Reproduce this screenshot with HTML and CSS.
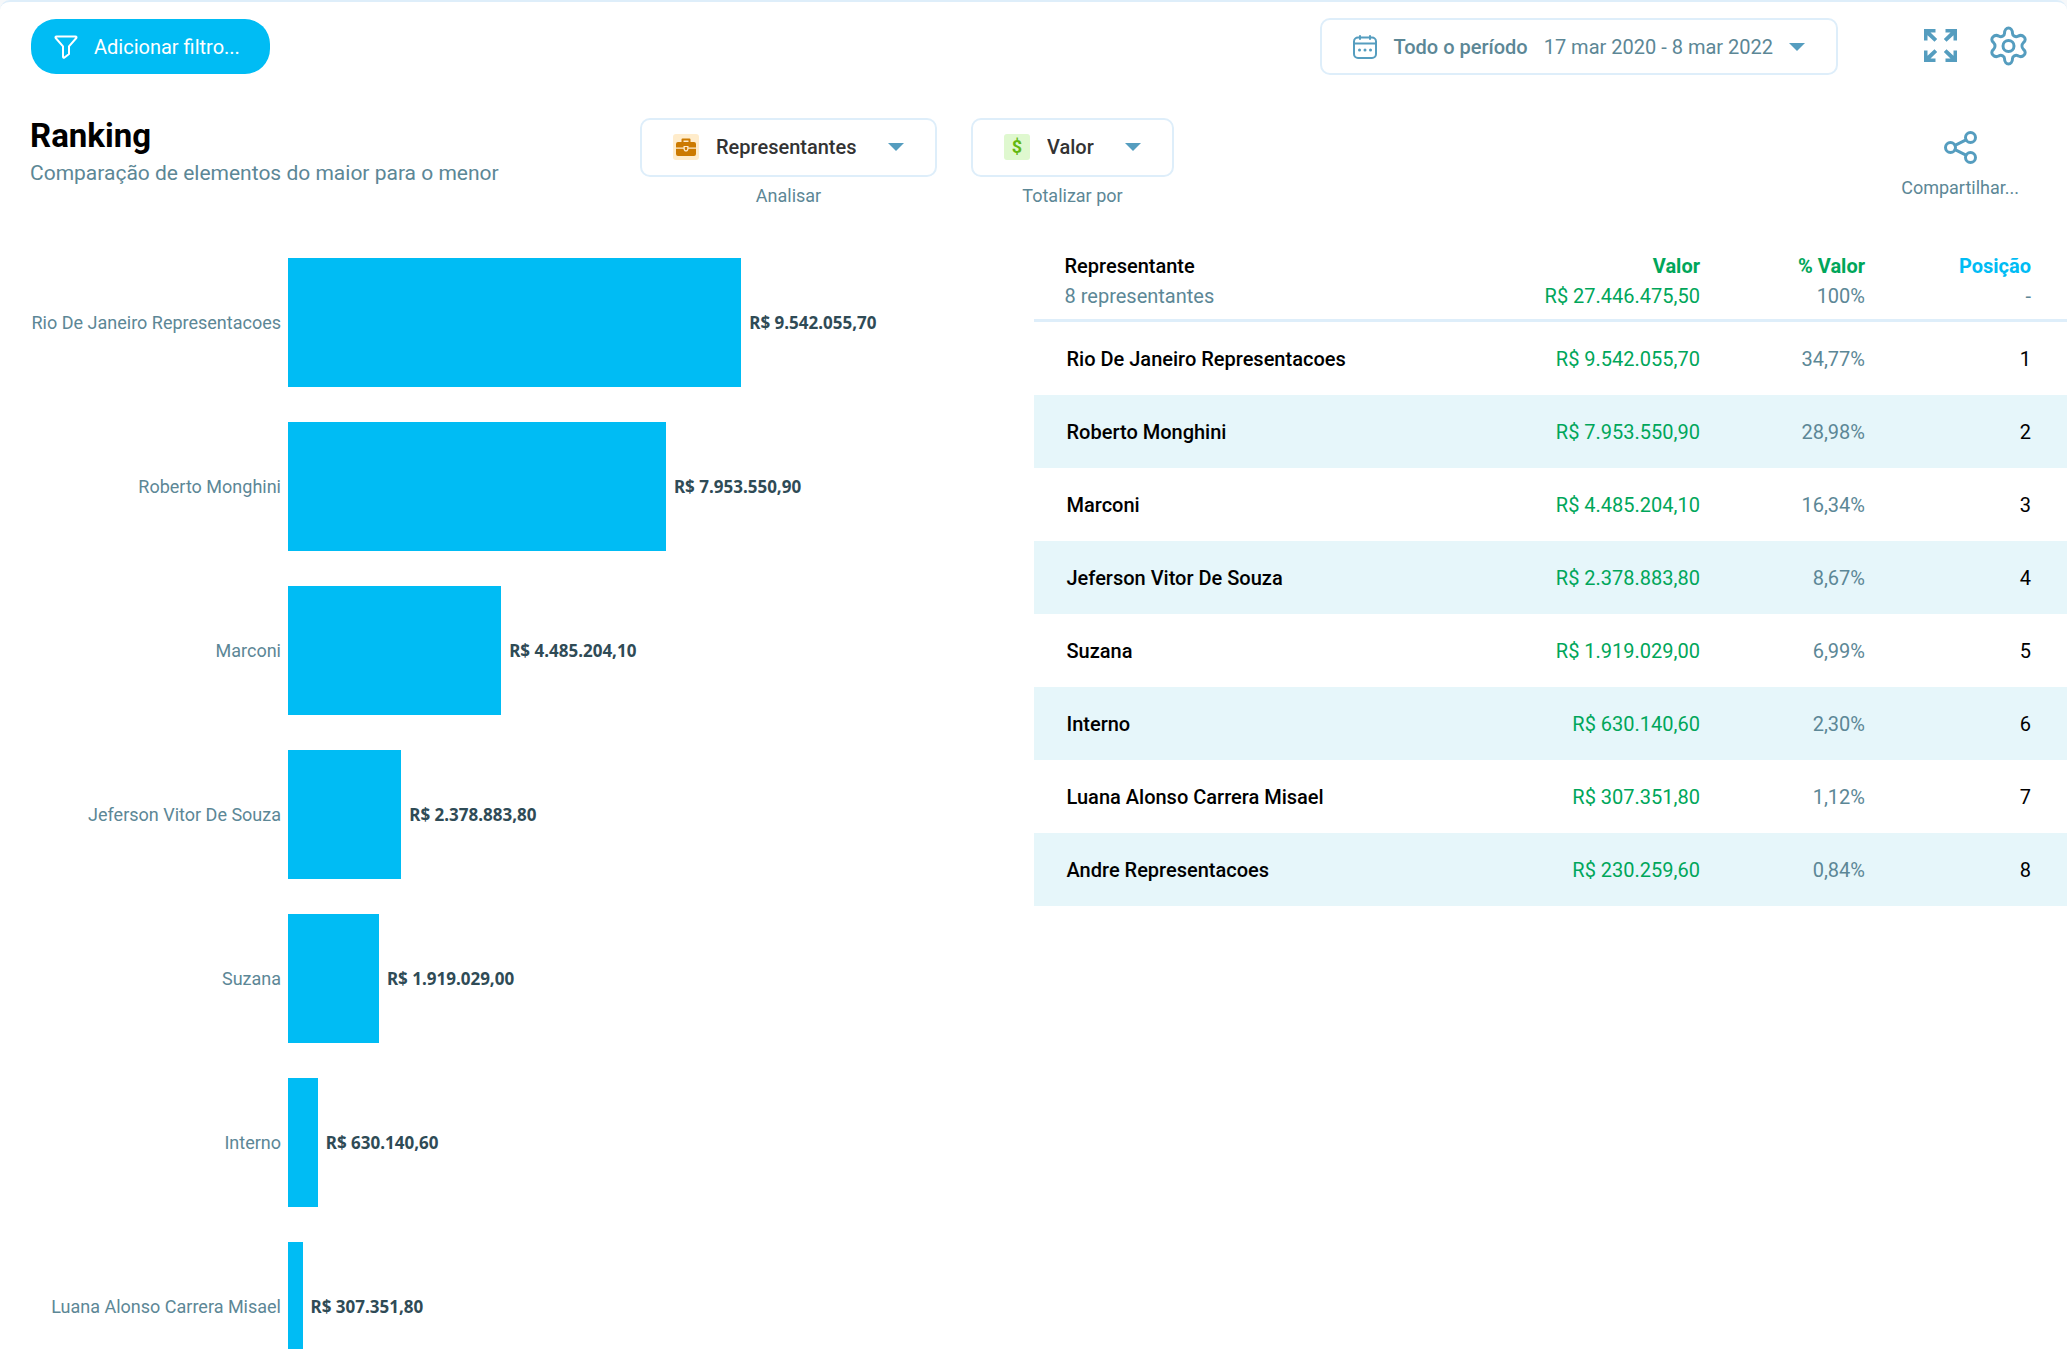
FILE: index.html
```html
<!DOCTYPE html>
<html lang="pt-BR">
<head>
<meta charset="utf-8">
<meta name="viewport" content="width=device-width, initial-scale=1">
<title>Ranking</title>
<link rel="stylesheet" href="styles.css">
</head>
<body>
<main class="card">
  <div class="toolbar">
    <button class="filter-button" type="button">
      <svg class="icon-filter" viewBox="0 0 24 24" aria-hidden="true"><path d="M2.500 1.500h19q1.500 0 .8 1.500l-7.300 8.300v7.700l-4.500 3.500q-1.500.6-1.500-.8V11.300L1.700 3q-.7-1.500.8-1.500z"/></svg>
      Adicionar filtro...
    </button>
    <div class="toolbar-right">
      <button class="period" type="button">
        <svg class="icon-calendar" viewBox="0 0 24 24" aria-hidden="true"><rect x="1" y="2.500" width="22" height="20.500" rx="4"/><path d="M1 8.500h22M7 1v3M17 1v3"/><path class="dots" d="M6.500 15h.01M12 15h.01M17.500 15h.01"/></svg>
        <strong class="period-name">Todo o período</strong>
        <span class="period-range">17 mar 2020 - 8 mar 2022</span>
        <svg class="caret" viewBox="0 0 16 8" aria-hidden="true"><path d="M0 0h16L8 8z"/></svg>
      </button>
      <div class="tools">
        <button class="icon-button" type="button" aria-label="Tela cheia">
          <svg class="icon-expand" viewBox="0 0 33 33" aria-hidden="true"><g id="arrow"><path class="solid" d="M0 0h11.500v3.500H6.500l6.700 6.500-2.700 2.800L3.500 6.300v5.200H0z"/></g><use href="#arrow" transform="matrix(-1 0 0 1 33 0)"/><use href="#arrow" transform="matrix(1 0 0 -1 0 33)"/><use href="#arrow" transform="rotate(180 16.500 16.500)"/></svg>
        </button>
        <button class="icon-button" type="button" aria-label="Configurações">
          <svg class="icon-gear" viewBox="0 0 35 40" aria-hidden="true"><circle cx="17.500" cy="20" r="5.500"/><path d="M13.500 7.500C13.500.2 21.500.2 21.500 7.500C21.500 9.500 24.500 11.500 27 10.200C31.500 7.500 37 13 32.500 16.500C30.500 18.500 30.500 21.500 32.500 23.500C37 27 31.500 32.500 27 29.800C24.500 28.500 21.500 30.500 21.500 32.500C21.500 39.800 13.500 39.800 13.500 32.500C13.500 30.500 10.500 28.500 8 29.800C3.500 32.500-2 27 2.500 23.500C4.500 21.500 4.500 18.500 2.500 16.500C-2 13 3.500 7.500 8 10.200C10.500 11.500 13.500 9.500 13.500 7.500z"/></svg>
        </button>
      </div>
    </div>
  </div>

  <header class="heading">
    <div class="titles">
      <h1>Ranking</h1>
      <p>Comparação de elementos do maior para o menor</p>
    </div>
    <div class="selectors">
      <div class="selector">
        <div class="select-box">
          <svg class="badge badge-orange" viewBox="0 0 26 26" aria-hidden="true"><path d="M5 8h16q2 0 2 2v3.500h-7.500V12h-5v1.500H3V10q0-2 2-2zM3 14.700h7.500q.2 2.800 2.500 2.800t2.500-2.800H23V20q0 2-2 2H5q-2 0-2-2z"/><path d="M11.800 13h2.400v2q-.2 1.200-1.200 1.200t-1.200-1.200z"/><path class="handle" d="M9.500 8V5.500h7V8"/></svg>
          <select id="analyse"><option>Representantes</option></select>
          <svg class="caret" viewBox="0 0 16 8" aria-hidden="true"><path d="M0 0h16L8 8z"/></svg>
        </div>
        <label for="analyse">Analisar</label>
      </div>
      <div class="selector">
        <div class="select-box">
          <span class="badge badge-green" aria-hidden="true">$</span>
          <select id="total"><option>Valor</option></select>
          <svg class="caret" viewBox="0 0 16 8" aria-hidden="true"><path d="M0 0h16L8 8z"/></svg>
        </div>
        <label for="total">Totalizar por</label>
      </div>
    </div>
    <button class="share" type="button">
      <svg class="icon-share" viewBox="0 0 33 33" aria-hidden="true"><circle cx="6.500" cy="16.500" r="5"/><circle cx="26.500" cy="6.500" r="5"/><circle cx="26.500" cy="26.500" r="5"/><path d="M11 14.300l11-5.500M11 18.700l11 5.500"/></svg>
      Compartilhar...
    </button>
  </header>

  <div class="content">
    <section class="chart" aria-label="Valor por representante">
      <div class="bar-row"><span class="bar-name">Rio De Janeiro Representacoes</span><div class="plot"><div class="bar" style="width:60.8%"></div><span class="bar-value">R$ 9.542.055,70</span></div></div>
      <div class="bar-row"><span class="bar-name">Roberto Monghini</span><div class="plot"><div class="bar" style="width:50.7%"></div><span class="bar-value">R$ 7.953.550,90</span></div></div>
      <div class="bar-row"><span class="bar-name">Marconi</span><div class="plot"><div class="bar" style="width:28.6%"></div><span class="bar-value">R$ 4.485.204,10</span></div></div>
      <div class="bar-row"><span class="bar-name">Jeferson Vitor De Souza</span><div class="plot"><div class="bar" style="width:15.2%"></div><span class="bar-value">R$ 2.378.883,80</span></div></div>
      <div class="bar-row"><span class="bar-name">Suzana</span><div class="plot"><div class="bar" style="width:12.2%"></div><span class="bar-value">R$ 1.919.029,00</span></div></div>
      <div class="bar-row"><span class="bar-name">Interno</span><div class="plot"><div class="bar" style="width:4%"></div><span class="bar-value">R$ 630.140,60</span></div></div>
      <div class="bar-row"><span class="bar-name">Luana Alonso Carrera Misael</span><div class="plot"><div class="bar" style="width:1.95%"></div><span class="bar-value">R$ 307.351,80</span></div></div>
    </section>

    <table class="ranking">
      <colgroup><col><col class="col-value"><col class="col-percent"><col class="col-position"></colgroup>
      <thead>
        <tr class="names"><th scope="col">Representante</th><th scope="col" class="green">Valor</th><th scope="col" class="green">% Valor</th><th scope="col" class="blue">Posição</th></tr>
        <tr class="totals"><td>8 representantes</td><td class="money">R$ 27.446.475,50</td><td>100%</td><td>-</td></tr>
      </thead>
      <tbody>
        <tr><th scope="row">Rio De Janeiro Representacoes</th><td class="money">R$ 9.542.055,70</td><td class="share-of">34,77%</td><td>1</td></tr>
        <tr><th scope="row">Roberto Monghini</th><td class="money">R$ 7.953.550,90</td><td class="share-of">28,98%</td><td>2</td></tr>
        <tr><th scope="row">Marconi</th><td class="money">R$ 4.485.204,10</td><td class="share-of">16,34%</td><td>3</td></tr>
        <tr><th scope="row">Jeferson Vitor De Souza</th><td class="money">R$ 2.378.883,80</td><td class="share-of">8,67%</td><td>4</td></tr>
        <tr><th scope="row">Suzana</th><td class="money">R$ 1.919.029,00</td><td class="share-of">6,99%</td><td>5</td></tr>
        <tr><th scope="row">Interno</th><td class="money">R$ 630.140,60</td><td class="share-of">2,30%</td><td>6</td></tr>
        <tr><th scope="row">Luana Alonso Carrera Misael</th><td class="money">R$ 307.351,80</td><td class="share-of">1,12%</td><td>7</td></tr>
        <tr><th scope="row">Andre Representacoes</th><td class="money">R$ 230.259,60</td><td class="share-of">0,84%</td><td>8</td></tr>
      </tbody>
    </table>
  </div>
</main>
</body>
</html>
```
FILE: styles.css
```css
:root {
  --cyan: #00bcf4;
  --slate: #5c8796;
  --steel: #559dbf;
  --line: #deeefa;
  --green: #00a65a;
}

* { box-sizing: border-box; }

body {
  margin: 0;
  background: #f6f8fa;
  color: #000;
  font: 400 20px/24px Roboto, "Liberation Sans", sans-serif;
}

button, select {
  margin: 0;
  padding: 0;
  border: 0;
  background: none;
  color: inherit;
  font: inherit;
  cursor: pointer;
}

svg {
  display: block;
  flex: none;
  fill: none;
  stroke: var(--steel);
  stroke-width: 2;
  stroke-linecap: round;
  stroke-linejoin: round;
}

.card {
  height: 100vh;
  overflow: hidden;
  background: #fff;
  border-top: 2px solid var(--line);
  border-radius: 10px 10px 0 0;
}

/* Toolbar */
.toolbar {
  display: flex;
  align-items: center;
  justify-content: space-between;
  padding: 16px 41px 0 31px;
}

.filter-button {
  display: flex;
  align-items: center;
  gap: 16px;
  height: 55px;
  padding: 0 30px 0 23px;
  border-radius: 25px;
  background: var(--cyan);
  color: #fff;
}

.icon-filter { width: 24px; height: 24px; stroke: #fff; }

.toolbar-right { display: flex; align-items: center; gap: 86px; }

.period {
  display: flex;
  align-items: center;
  gap: 16px;
  height: 57px;
  padding: 0 31px;
  border: 2px solid var(--line);
  border-radius: 10px;
  color: var(--slate);
}

.period-name { font-weight: 500; }
.icon-calendar { width: 24px; height: 24px; }
.icon-calendar .dots { stroke-width: 3; }
.caret { width: 16px; height: 8px; fill: var(--steel); stroke: none; }

.tools { display: flex; align-items: center; gap: 34px; padding-bottom: 2px; }
.icon-expand { width: 33px; height: 33px; stroke: none; }
.icon-expand .solid { fill: var(--steel); }
.icon-gear { width: 35px; height: 40px; stroke-width: 3; overflow: visible; }

/* Heading */
.heading {
  display: grid;
  grid-template-columns: 610px auto 1fr;
  align-items: start;
  padding: 43px 48px 0 30px;
}

h1 { margin: 0; font-size: 33px; line-height: 36px; font-weight: 700; }

.titles p { margin: 0; font-size: 21px; line-height: 38px; color: var(--slate); }

.selectors { display: flex; gap: 34px; }

.selector {
  display: flex;
  flex-direction: column;
  align-items: center;
  gap: 7px;
  font-size: 18px;
  color: var(--slate);
}

.select-box {
  display: flex;
  align-items: center;
  height: 59px;
  padding: 0 31px 2px;
  border: 2px solid var(--line);
  border-radius: 10px;
}

.select-box select {
  appearance: none;
  margin-left: 17px;
  padding-right: 47px;
  color: #333;
  font-size: 20px;
  font-weight: 500;
}

.select-box .caret { margin-left: -16px; pointer-events: none; }

.badge { width: 26px; height: 26px; border-radius: 3px; }
.badge-orange { background: #ffeccb; fill: #cc7a00; stroke: none; }
.badge-orange .handle { fill: none; stroke: #cc7a00; }

.badge-green {
  background: #dff8cf;
  color: #63b810;
  font-weight: 700;
  line-height: 26px;
  text-align: center;
}

.share {
  display: flex;
  flex-direction: column;
  align-items: center;
  gap: 12px;
  justify-self: end;
  padding-top: 13px;
  font-size: 18px;
  color: var(--slate);
}

.icon-share { width: 33px; height: 33px; stroke-width: 3; }

/* Chart and table */
.content {
  display: grid;
  grid-template-columns: 1fr 1fr;
  align-items: start;
  padding-top: 42px;
}

.chart { display: grid; gap: 35px; padding: 8px 0 0 30px; }

.bar-row {
  display: grid;
  grid-template-columns: 251px 1fr;
  gap: 7px;
  align-items: center;
}

.bar-name {
  font-size: 18px;
  color: var(--slate);
  text-align: right;
  white-space: nowrap;
}

.plot { display: flex; align-items: center; gap: 8px; }
.bar { flex: none; height: 129px; background: var(--cyan); }

.bar-value {
  color: #2f4b56;
  font: 700 17px/24px "Noto Sans", sans-serif;
  white-space: nowrap;
}

.ranking {
  width: 100%;
  border-collapse: separate;
  border-spacing: 0;
  table-layout: fixed;
}

.col-value { width: 220px; }
.col-percent { width: 165px; }
.col-position { width: 202px; }

.ranking th, .ranking td {
  padding: 0;
  font-weight: 400;
  text-align: right;
  white-space: nowrap;
}

.ranking th:first-child, .ranking td:first-child { padding-left: 31px; text-align: left; }
.ranking th:last-child, .ranking td:last-child { padding-right: 36px; }

.ranking .names th { height: 31px; font-weight: 500; }
.ranking .names .green { color: var(--green); font-weight: 700; }
.ranking .names .blue { color: var(--cyan); font-weight: 700; }

.ranking .totals td {
  height: 41px;
  padding-bottom: 9px;
  border-bottom: 3px solid var(--line);
  color: var(--slate);
}

.ranking .money, .ranking .totals .money { color: var(--green); }

.ranking tbody th, .ranking tbody td { height: 73px; }
.ranking tbody th:first-child { padding-left: 33px; font-weight: 500; }
.ranking .share-of { color: var(--slate); }
.ranking tbody tr:nth-child(even) { background: #e6f6fa; }
```
